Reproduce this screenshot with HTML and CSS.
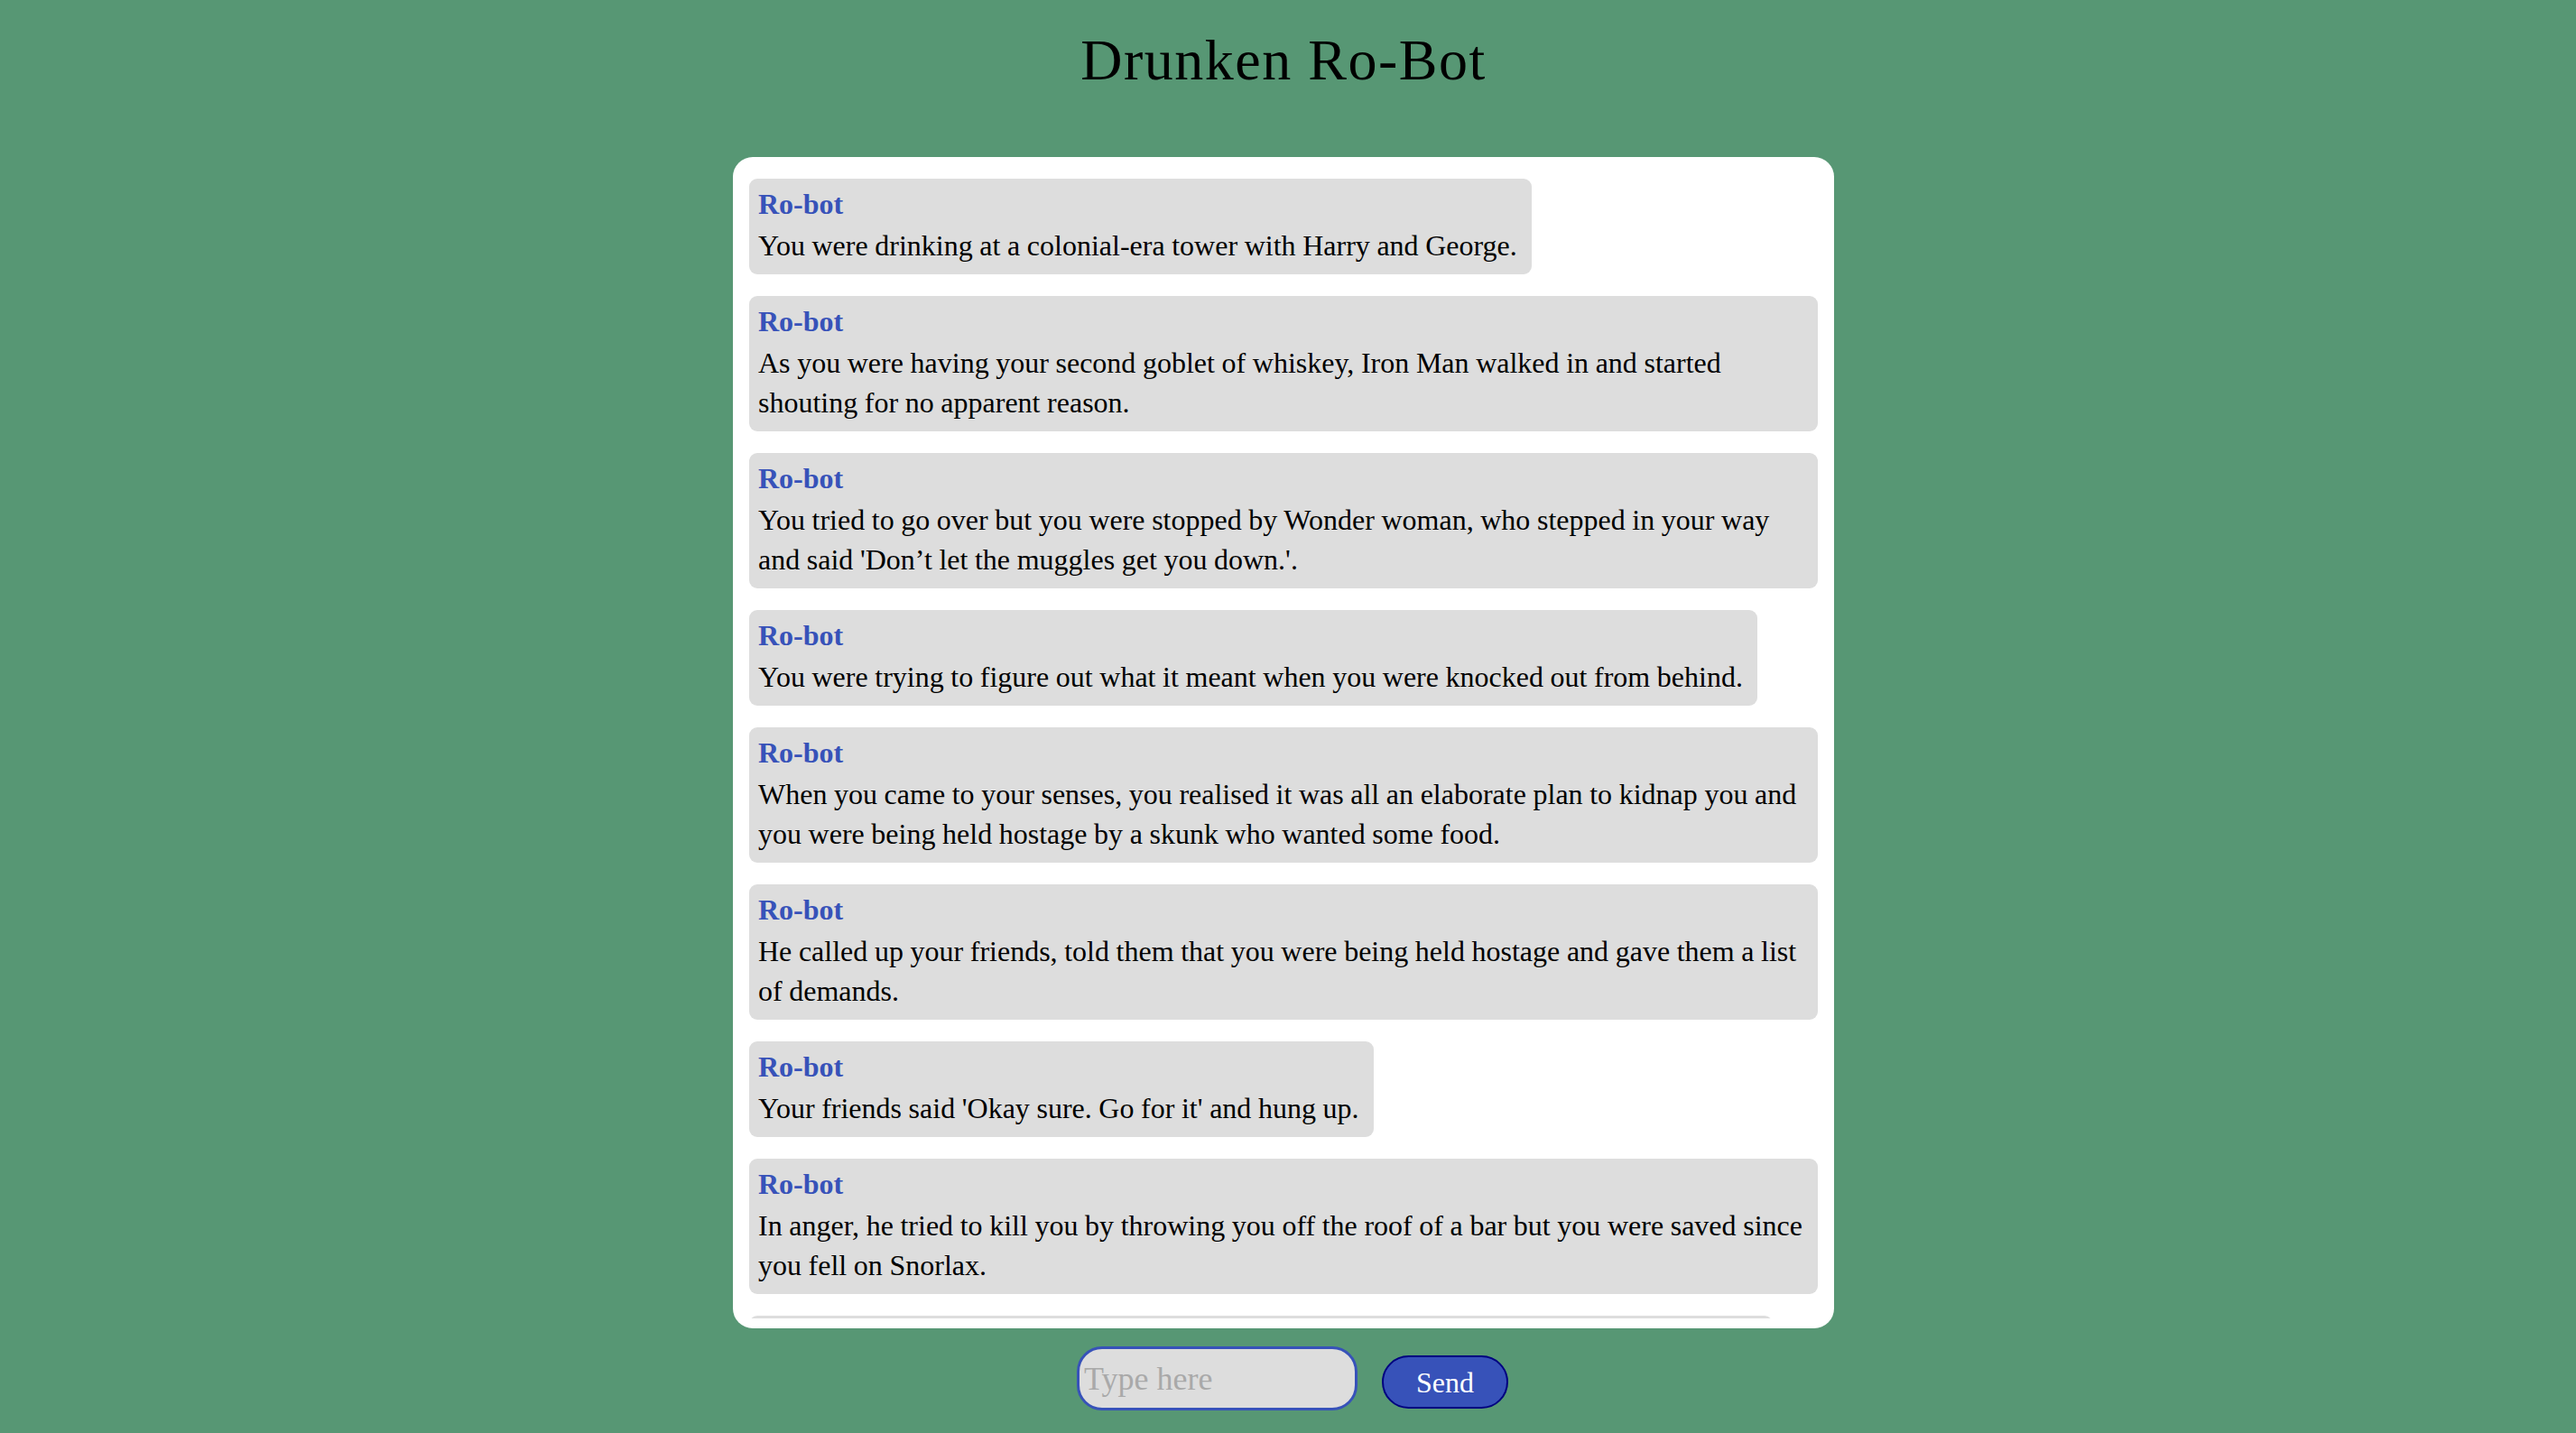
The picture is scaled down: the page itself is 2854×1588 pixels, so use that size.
FILE: index.html
```html
<!DOCTYPE html>
<html lang="en">
<head>
<meta charset="utf-8">
<title>Drunken Ro-Bot</title>
<link rel="stylesheet" href="styles.css">
</head>
<body>
<div class="page">
  <h1 class="title">Drunken Ro-Bot</h1>
  <div class="chat-box">
    <div class="messages">
      <div class="msg"><div class="name">Ro-bot</div><div class="text">You were drinking at a colonial-era tower with Harry and George.</div></div>
      <div class="msg"><div class="name">Ro-bot</div><div class="text">As you were having your second goblet of whiskey, Iron Man walked in and started shouting for no apparent reason.</div></div>
      <div class="msg"><div class="name">Ro-bot</div><div class="text">You tried to go over but you were stopped by Wonder woman, who stepped in your way and said 'Don’t let the muggles get you down.'.</div></div>
      <div class="msg"><div class="name">Ro-bot</div><div class="text">You were trying to figure out what it meant when you were knocked out from behind.</div></div>
      <div class="msg"><div class="name">Ro-bot</div><div class="text">When you came to your senses, you realised it was all an elaborate plan to kidnap you and you were being held hostage by a skunk who wanted some food.</div></div>
      <div class="msg"><div class="name">Ro-bot</div><div class="text">He called up your friends, told them that you were being held hostage and gave them a list of demands.</div></div>
      <div class="msg"><div class="name">Ro-bot</div><div class="text">Your friends said 'Okay sure. Go for it' and hung up.</div></div>
      <div class="msg"><div class="name">Ro-bot</div><div class="text">In anger, he tried to kill you by throwing you off the roof of a bar but you were saved since you fell on Snorlax.</div></div>
      <div class="msg"><div class="name">Ro-bot</div><div class="text">Snorlax woke up, yawned loudly and rolled over, and you were left wondering why so.</div></div>
    </div>
  </div>
  <div class="input-row">
    <input class="input" type="text" placeholder="Type here">
    <button class="send" type="button">Send</button>
  </div>
</div>
</body>
</html>
```
FILE: styles.css
```css
html, body {
  margin: 0;
  padding: 0;
}
body {
  background: #579774;
  font-family: "Liberation Serif", "Times New Roman", serif;
  color: #000;
  height: 1588px;
  overflow: hidden;
}
.page {
  padding-right: 10px;
  display: flex;
  flex-direction: column;
  align-items: center;
}
.title {
  margin: 27px 0 0 0;
  font-size: 64px;
  line-height: 80px;
  font-weight: normal;
  letter-spacing: 1.5px;
  text-align: center;
}
.chat-box {
  margin-top: 67px;
  width: 1220px;
  height: 1298px;
  box-sizing: border-box;
  background: #ffffff;
  border-radius: 22px;
  padding: 11px 18px;
}
.messages {
  height: 1276px;
  overflow: hidden;
  padding-top: 13px;
  box-sizing: border-box;
  display: flex;
  flex-direction: column;
  align-items: flex-start;
  gap: 24px;
}
.msg {
  background: #dddddd;
  border-radius: 9px;
  padding: 7px 16px 10px 10px;
  max-width: 100%;
  box-sizing: border-box;
  font-size: 32px;
}
.name {
  color: #3752b9;
  font-weight: bold;
  line-height: 42px;
}
.text {
  margin-top: 3px;
  line-height: 44px;
  word-spacing: -0.4px;
}
.input-row {
  margin-top: 20px;
  padding-left: 20px;
  display: flex;
  align-items: flex-start;
  gap: 27px;
}
.input {
  width: 311px;
  height: 71px;
  box-sizing: border-box;
  border: 3px solid #3752b9;
  border-radius: 28px;
  background: #dddddd;
  font-family: "Liberation Serif", "Times New Roman", serif;
  font-size: 36px;
  line-height: 44px;
  padding: 0 5px;
  outline: none;
  margin: 0;
}
.input::placeholder {
  color: #a9a9a9;
}
.send {
  margin-top: 10px;
  width: 140px;
  height: 59px;
  box-sizing: border-box;
  border: 2px solid #000080;
  border-radius: 30px;
  background: #3752b9;
  color: #ffffff;
  font-family: "Liberation Serif", "Times New Roman", serif;
  font-size: 32px;
  line-height: 40px;
  padding: 0;
}
```
